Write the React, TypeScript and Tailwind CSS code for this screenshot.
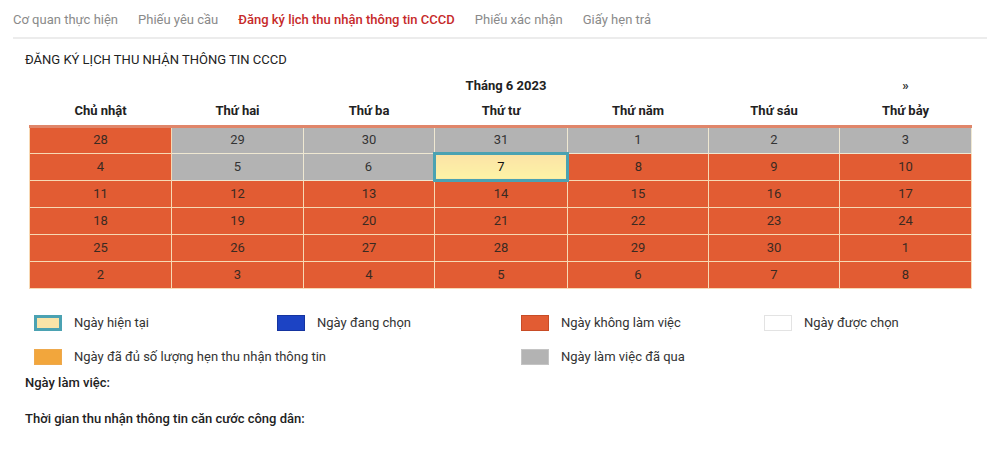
import React from "react";

const tabs = [
  { label: "Cơ quan thực hiện", active: false },
  { label: "Phiếu yêu cầu", active: false },
  { label: "Đăng ký lịch thu nhận thông tin CCCD", active: true },
  { label: "Phiếu xác nhận", active: false },
  { label: "Giấy hẹn trả", active: false },
];

const days = ["Chủ nhật", "Thứ hai", "Thứ ba", "Thứ tư", "Thứ năm", "Thứ sáu", "Thứ bảy"];
const colW = ["w-[142px]", "w-[132px]", "w-[131px]", "w-[133px]", "w-[141px]", "w-[131px]", "w-[132px]"];

type Kind = "off" | "past" | "today";
const weeks: [number, Kind][][] = [
  [[28, "off"], [29, "past"], [30, "past"], [31, "past"], [1, "past"], [2, "past"], [3, "past"]],
  [[4, "off"], [5, "past"], [6, "past"], [7, "today"], [8, "off"], [9, "off"], [10, "off"]],
  [[11, "off"], [12, "off"], [13, "off"], [14, "off"], [15, "off"], [16, "off"], [17, "off"]],
  [[18, "off"], [19, "off"], [20, "off"], [21, "off"], [22, "off"], [23, "off"], [24, "off"]],
  [[25, "off"], [26, "off"], [27, "off"], [28, "off"], [29, "off"], [30, "off"], [1, "off"]],
  [[2, "off"], [3, "off"], [4, "off"], [5, "off"], [6, "off"], [7, "off"], [8, "off"]],
];

const cellCls: Record<Kind, string> = {
  off: "bg-[#e25c33] text-[#3a2a22] border border-[#f7d9b4]",
  past: "bg-[#b3b3b3] text-[#333] border border-[#efe8d2]",
  today: "bg-gradient-to-b from-[#fbe3a6] to-[#fdf3a6] text-[#111] border-[3px] border-[#4ba2b2]",
};

const legend = [
  { label: "Ngày hiện tại", sw: "bg-[#f9e4a8] border-[3px] border-[#4ba2b2]" },
  { label: "Ngày đang chọn", sw: "bg-[#1c43c4] border border-[#1534a0]" },
  { label: "Ngày không làm việc", sw: "bg-[#e25c33] border border-[#c84c26]" },
  { label: "Ngày được chọn", sw: "bg-white border border-[#e3e3e3]" },
  { label: "Ngày đã đủ số lượng hẹn thu nhận thông tin", sw: "bg-[#f2a63c] border border-[#eea94d]" },
  null,
  { label: "Ngày làm việc đã qua", sw: "bg-[#b3b3b3] border border-[#c4c4c4]" },
  null,
];

export default function App() {
  return (
    <div className="w-[1000px] h-[455px] bg-white text-[#222] px-[13px] overflow-hidden font-['Roboto','Liberation_Sans',sans-serif]">
      {/* tabs */}
      <div className="flex gap-[20px] pt-[11px] pb-[8px] border-b-2 border-[#ececec]">
        {tabs.map((t) => (
          <div
            key={t.label}
            className={`text-[13px] leading-[18px] ${
              t.active ? "text-[#c62a2a] font-medium" : "text-[#8a8a8a]"
            }`}
          >
            {t.label}
          </div>
        ))}
      </div>

      <div className="pl-[12px] pt-[13px] text-[13px] leading-[16px] text-[#222]">
        ĐĂNG KÝ LỊCH THU NHẬN THÔNG TIN CCCD
      </div>

      {/* calendar */}
      <div className="pl-[16px] pt-[9px]">
        <table className="table-fixed border-collapse w-[942px]">
          <colgroup>
            {colW.map((w, i) => (
              <col key={i} className={w} />
            ))}
          </colgroup>
          <thead>
            <tr className="h-[18px]">
              <th colSpan={2} />
              <th colSpan={3} className="text-[13px] leading-[18px] font-bold text-center">
                Tháng 6 2023
              </th>
              <th />
              <th className="text-[13px] leading-[18px] font-bold text-center text-[#333]">»</th>
            </tr>
            <tr className="h-[31px] border-b-[3px] border-[#e0866a]">
              {days.map((d) => (
                <th key={d} className="text-[13px] leading-[16px] font-bold text-center align-bottom pb-[6px]">
                  {d}
                </th>
              ))}
            </tr>
          </thead>
          <tbody>
            {weeks.map((w, r) => (
              <tr key={r} className="h-[27px]">
                {w.map(([n, k], c) => (
                  <td
                    key={c}
                    className={`${cellCls[k]} text-center text-[13px] leading-[16px] p-0`}
                  >
                    {n}
                  </td>
                ))}
              </tr>
            ))}
          </tbody>
        </table>
      </div>

      {/* legend */}
      <div className="grid grid-cols-[243px_244px_243px_230px] gap-y-[18px] pl-[21px] pt-[26px]">
        {legend.map((l, i) =>
          l ? (
            <div key={i} className="flex items-center gap-[12px] h-[16px]">
              <span className={`w-[28px] h-[16px] box-border shrink-0 ${l.sw}`} />
              <span className="text-[13px] leading-[16px] text-[#333] whitespace-nowrap">{l.label}</span>
            </div>
          ) : (
            <div key={i} />
          )
        )}
      </div>

      <div className="pl-[12px] pt-[10px] text-[13px] leading-[16px] font-medium text-[#222]">Ngày làm việc:</div>
      <div className="pl-[12px] pt-[20px] text-[13px] leading-[16px] font-medium text-[#222]">
        Thời gian thu nhận thông tin căn cước công dân:
      </div>
    </div>
  );
}
